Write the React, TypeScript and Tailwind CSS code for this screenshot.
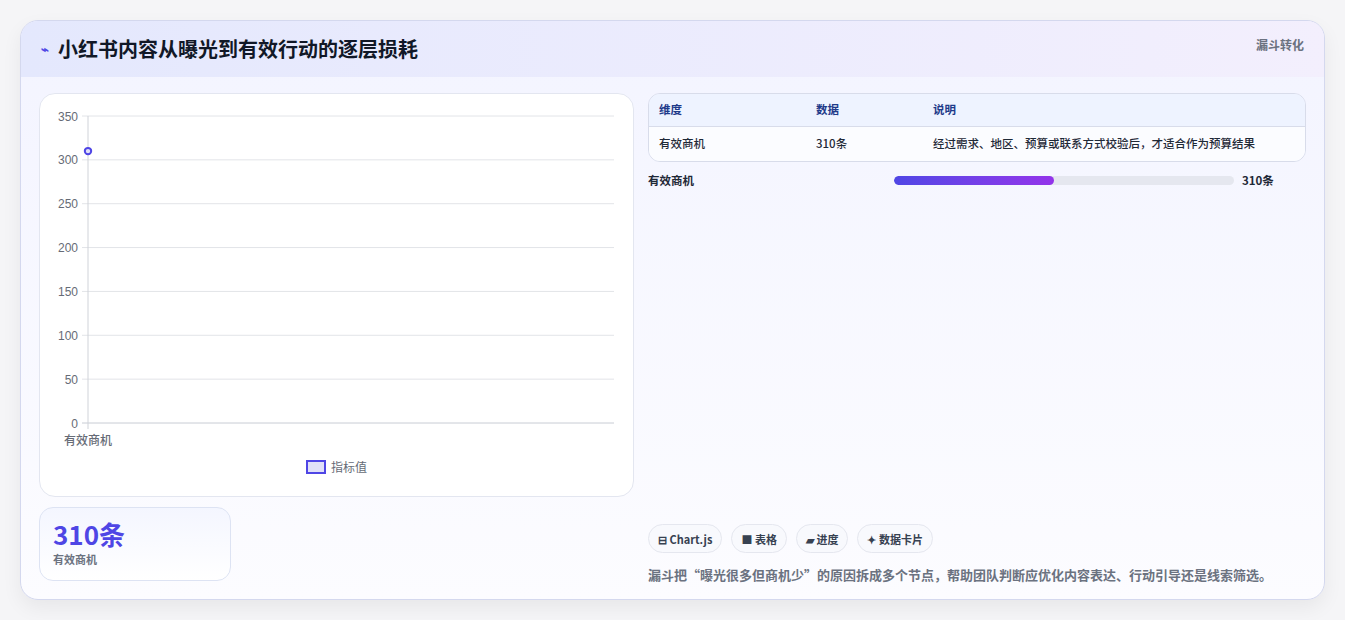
import React from "react";

const font = { fontFamily: '"Noto Sans CJK SC", "Noto Sans", sans-serif' };

function Chart() {
  const ticks = [350, 300, 250, 200, 150, 100, 50, 0];
  const top = 22, bottom = 329, left = 48, right = 574;
  const y = (v: number) => bottom - (v / 350) * (bottom - top);
  return (
    <svg width="594" height="403" className="block" style={{ fontFamily: '"Liberation Sans", "Noto Sans CJK SC", sans-serif' }}>
      {ticks.map((t) => (
        <g key={t}>
          <line x1={left - 6} x2={right} y1={y(t)} y2={y(t)} stroke={t === 0 ? "#c8ccd4" : "#e2e4e8"} strokeWidth="1" />
          <text x={left - 10} y={y(t) + 4.5} textAnchor="end" fontSize="12" fill="#666b76">{t}</text>
        </g>
      ))}
      <line x1={left} x2={left} y1={top} y2={bottom + 6} stroke="#d0d3d9" />
      <circle cx={left} cy={y(310)} r="3.2" fill="#e0e0f8" stroke="#4f46e5" strokeWidth="2" />
      <text x={left} y={351} textAnchor="middle" fontSize="12" fontWeight="500" fill="#666b76" style={font}>有效商机</text>
      <rect x="267" y="367" width="18" height="12" fill="#e0e0f8" stroke="#4f46e5" strokeWidth="2" />
      <text x="291" y="378" fontSize="12" fill="#666b76" style={font}>指标值</text>
    </svg>
  );
}

export default function App() {
  return (
    <div className="w-[1345px] h-[620px] bg-[#f5f5f7] pt-[20px] pl-[20px]" style={font}>
      <div className="w-[1305px] h-[580px] rounded-[18px] border border-[#d4d8ee] bg-gradient-to-b from-[#f3f4ff] to-[#fcfcff] overflow-hidden shadow-[0_8px_20px_rgba(0,0,0,0.06)] flex flex-col">
        <div className="h-[56px] shrink-0 bg-gradient-to-r from-[#e4e8fd] to-[#f3effd] flex items-start justify-between px-[20px]">
          <div className="flex items-center gap-[9px] mt-[14px]">
            <span className="text-[13px] text-[#4f46e5] font-bold">⌁</span>
            <span className="text-[20px] font-bold text-[#111827] leading-[28px]">小红书内容从曝光到有效行动的逐层损耗</span>
          </div>
          <span className="mt-[15px] text-[12px] font-bold text-[#6b7280]">漏斗转化</span>
        </div>
        <div className="flex gap-[14px] px-[18px] pt-[16px]">
          <div className="w-[595px] shrink-0 flex flex-col gap-[10px]">
            <div className="h-[404px] rounded-[16px] border border-[#e3e6f0] bg-white"><Chart /></div>
            <div className="w-[192px] h-[74px] rounded-[14px] border border-[#dde3f3] bg-gradient-to-b from-[#f4f6ff] to-white px-[13px] pt-[9px]">
              <div className="text-[26px] font-bold text-[#4f46e5] leading-[34px]">310条</div>
              <div className="text-[11px] font-bold text-[#6b7280]">有效商机</div>
            </div>
          </div>
          <div className="flex-1 flex flex-col">
            <div className="rounded-[12px] border border-[#d8dcea] overflow-hidden text-[11.5px]">
              <div className="flex h-[33px] items-center bg-[#eef3ff] border-b border-[#d8dcea] font-bold text-[#1e3a8a] px-[10px]">
                <span className="w-[157px]">维度</span><span className="w-[117px]">数据</span><span>说明</span>
              </div>
              <div className="flex h-[34px] items-center bg-[#fbfcff] text-[#1f2937] px-[10px] font-medium">
                <span className="w-[157px]">有效商机</span><span className="w-[117px]">310条</span><span>经过需求、地区、预算或联系方式校验后，才适合作为预算结果</span>
              </div>
            </div>
            <div className="flex items-center mt-[10px] text-[11.5px] font-bold text-[#1f2937]">
              <span className="w-[246px]">有效商机</span>
              <div className="w-[340px] h-[9px] rounded-full bg-[#e5e7ef] overflow-hidden">
                <div className="h-full rounded-full bg-gradient-to-r from-[#4f46e5] to-[#9333ea]" style={{ width: "47%" }} />
              </div>
              <span className="ml-[8px]">310条</span>
            </div>
            <div className="mt-[335px] flex gap-[9px] text-[11px] font-bold text-[#374151]">
              {["⊟ Chart.js", "■ 表格", "▰ 进度", "✦ 数据卡片"].map((t) => (
                <span key={t} className="h-[29px] px-[9px] rounded-full border border-[#e5e7ef] bg-[#f8f9fd] flex items-center">{t}</span>
              ))}
            </div>
            <div className="mt-[12px] text-[13px] font-bold text-[#6b7280]">漏斗把“曝光很多但商机少”的原因拆成多个节点，帮助团队判断应优化内容表达、行动引导还是线索筛选。</div>
          </div>
        </div>
      </div>
    </div>
  );
}
